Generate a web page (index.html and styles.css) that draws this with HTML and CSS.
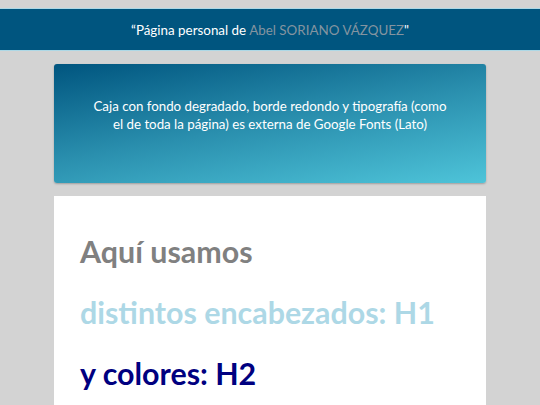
FILE: index.html
```html
<!DOCTYPE html>
<html lang="es">
<head>
<meta charset="utf-8">
<title>Página personal</title>
<link rel="stylesheet" href="styles.css">
</head>
<body>
<header class="top">
  <p class="top-text">“Página personal de <span class="name">Abel SORIANO VÁZQUEZ</span>"</p>
</header>
<main class="wrap">
  <section class="grad-box">
    <p>Caja con fondo degradado, borde redondo y tipografía (como el de toda la página) es externa de Google Fonts (Lato)</p>
  </section>
  <section class="card">
    <h1 class="h-gray">Aquí usamos</h1>
    <h1 class="h-light">distintos encabezados: H1</h1>
    <h2 class="h-navy">y colores: H2</h2>
  </section>
</main>
</body>
</html>
```
FILE: styles.css
```css
html, body {
  margin: 0;
  padding: 0;
}
body {
  background: #d3d3d3;
  font-family: Lato, "Open Sans", sans-serif;
  padding-top: 8px;
}
.top {
  background: #00557f;
  border-top: 1px solid #add8e6;
  border-bottom: 1px solid #add8e6;
  height: 41px;
  display: flex;
  align-items: center;
  justify-content: center;
}
.top-text {
  margin: 0;
  color: #ffffff;
  font-size: 13.4px;
}
.name {
  color: #8494a0;
}
.wrap {
  width: 80%;
  margin: 13px auto 0;
  display: flex;
  flex-direction: column;
  gap: 13px;
}
.grad-box {
  height: 119px;
  box-sizing: border-box;
  border-radius: 3px;
  background: linear-gradient(170deg, #00557f 0%, #2a8fae 50%, #4ec4d9 100%);
  box-shadow: 0 1px 2px rgba(0,0,0,0.25);
  display: flex;
  align-items: center;
  justify-content: center;
  padding: 0 36px 17px;
}
.grad-box p {
  margin: 0;
  color: #ffffff;
  font-size: 13.3px;
  line-height: 18px;
  text-align: center;
}
.card {
  background: #ffffff;
  padding: 25px 26px 20px;
}
.card h1, .card h2 {
  margin: 0;
  font-weight: bold;
  font-size: 30.4px;
  line-height: 61px;
}
.h-gray { color: #808080; }
.h-light { color: #add8e6; }
.h-navy { color: #000080; }
```
